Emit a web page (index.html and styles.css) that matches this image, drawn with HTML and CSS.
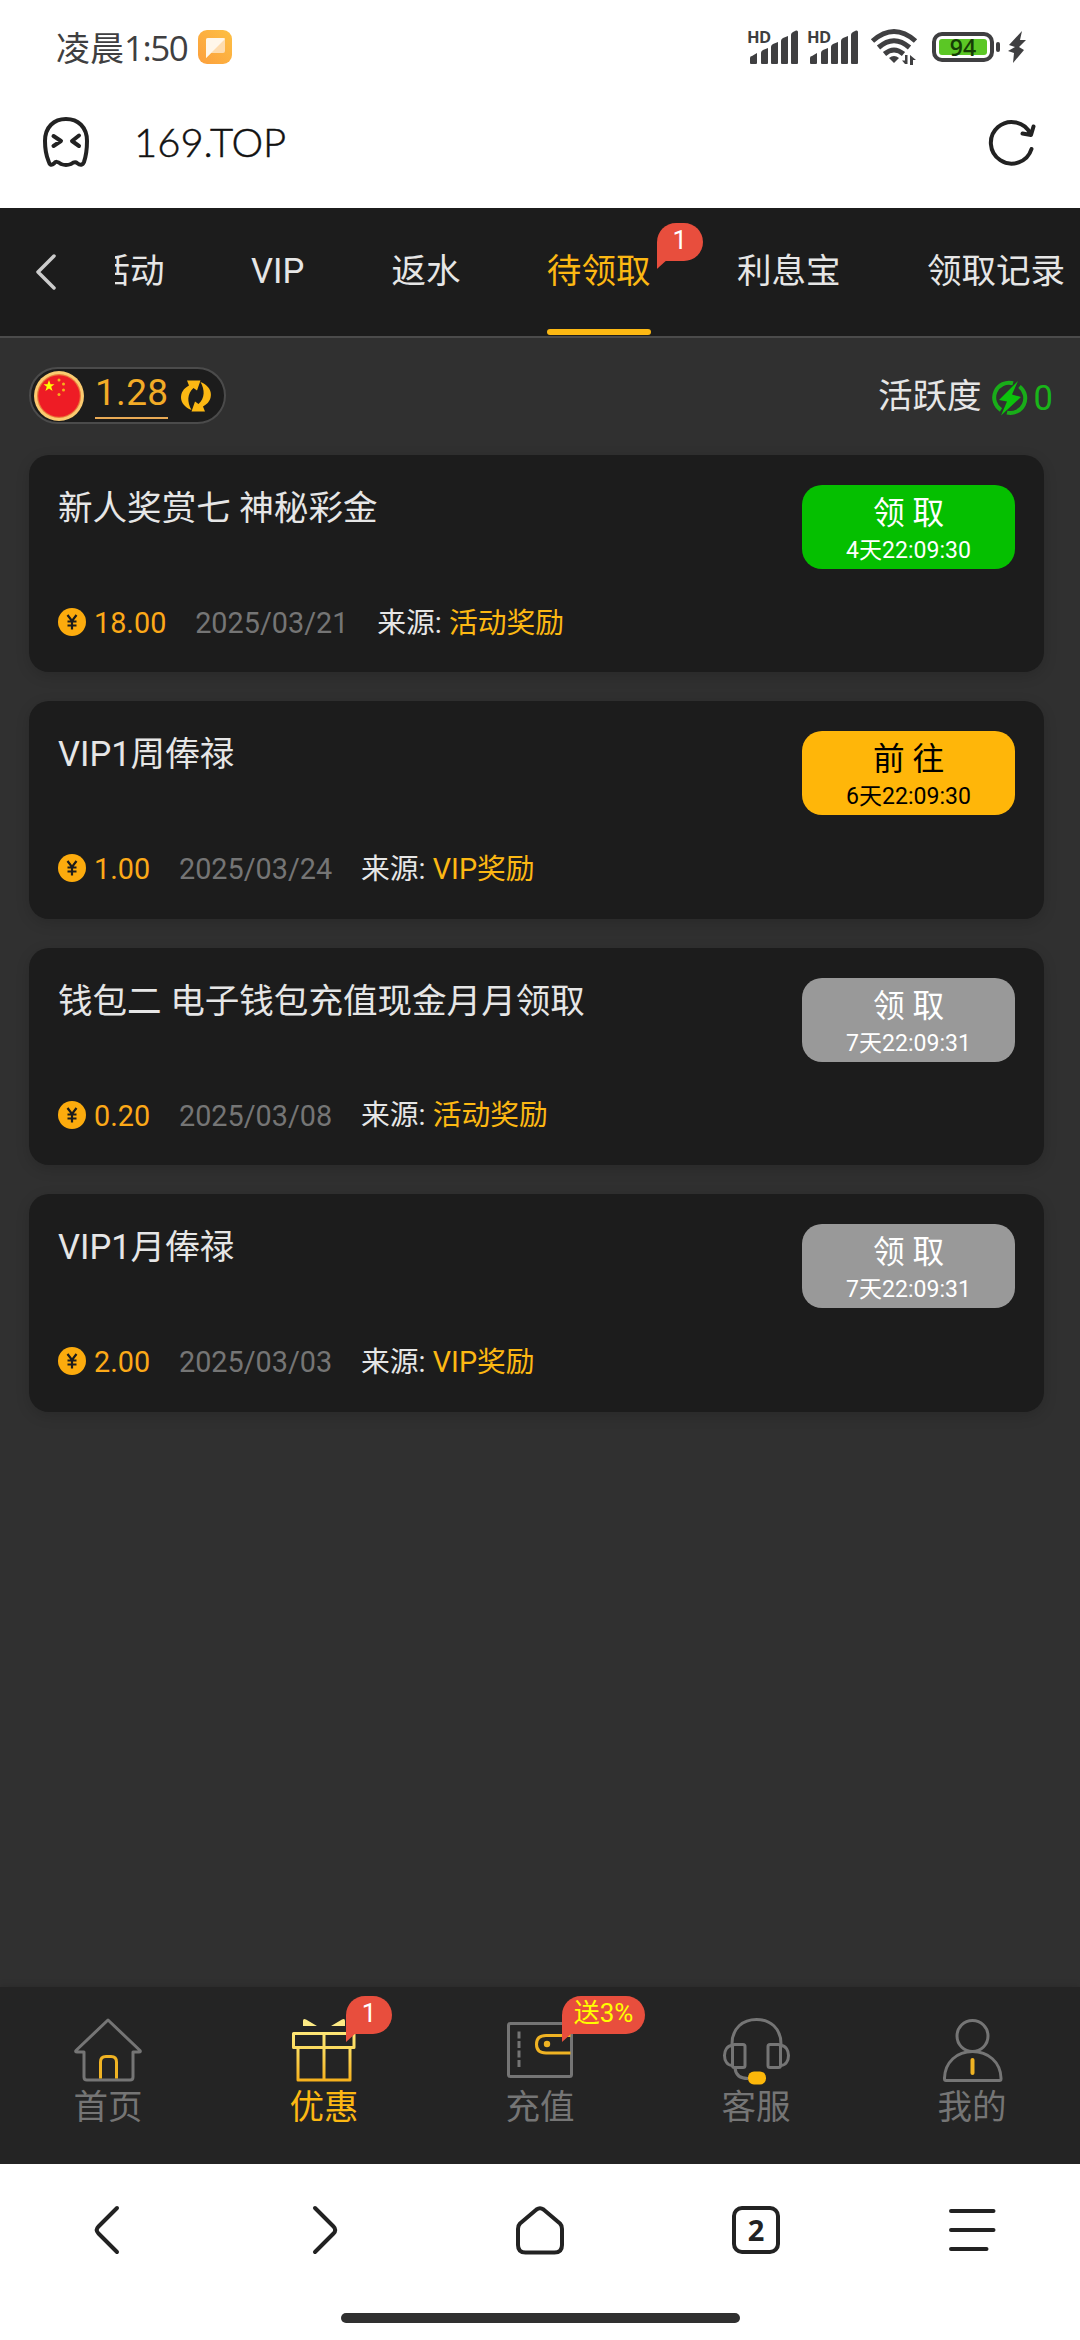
FILE: index.html
```
<!DOCTYPE html>
<html lang="zh-CN">
<head>
<meta charset="utf-8">
<title>待领取</title>
<link rel="stylesheet" href="styles.css">
</head>
<body>
<svg width="0" height="0" class="defs">
  <defs>
    <symbol id="signal" viewBox="0 0 50 34">
      <path d="M2 33V28Q2 26 4 26L9 23V33Q9 34 8 34H3Q2 34 2 33ZM13 33V23Q13 21 15 20L20 18V33Q20 34 19 34H14Q13 34 13 33ZM23 33V17Q23 15 25 14L30 12V33Q30 34 29 34H24Q23 34 23 33ZM33 33V11Q33 9 35 8L40 6V33Q40 34 39 34H34Q33 34 33 33ZM43 33V5Q43 3 45 2L48 0.5Q50 0 50 2V33Q50 34 49 34H44Q43 34 43 33Z"/>
    </symbol>
    <symbol id="coin" viewBox="0 0 28 28">
      <circle cx="14" cy="14" r="14" fill="#fcab0d"/>
      <path d="M9.500 7 14 13 18.500 7M14 13V21.500M9.500 13.500H18.500M9.500 17.500H18.500" fill="none" stroke="#1c1c1c" stroke-width="2.200"/>
    </symbol>
  </defs>
</svg>

<header class="status">
  <span class="clock">凌晨<b>1:50</b></span>
  <svg class="app" viewBox="0 0 34 34">
    <defs><linearGradient id="o" x1="1" y1="0" x2="0" y2="1"><stop offset="0" stop-color="#fdc044"/><stop offset="1" stop-color="#fc9f3c"/></linearGradient></defs>
    <rect width="34" height="34" rx="9" fill="url(#o)"/>
    <path d="M10 8H25Q27 8 27 10V21Q27 23 25 23H13L8 28V10Q8 8 10 8Z" fill="#fedcae"/>
    <path d="M10 8H25Q27 8 27 9L8 28V10Q8 8 10 8Z" fill="#fff7ea"/>
  </svg>
  <div class="signals">
    <div class="sig"><i>HD</i><svg viewBox="0 0 50 34"><use href="#signal"/></svg></div>
    <div class="sig"><i>HD</i><svg viewBox="0 0 50 34"><use href="#signal"/></svg></div>
    <svg class="wifi" viewBox="0 0 46 36">
      <g fill="none" stroke="#3f3f41" stroke-width="5">
        <path d="M1.500 12Q23-7 44.500 12"/><path d="M7.500 18.500Q23 5 38.500 18.500"/><path d="M13.500 25Q23 17 32.500 25"/>
      </g>
      <path d="M18 29Q23 25 28 29L23 34Z" fill="#3f3f41"/>
      <path d="M36.500 26V35H34L31 31.500H34V26ZM39 36V26L45 31H42V36Z" fill="#3f3f41"/>
    </svg>
    <div class="battery"><span>94</span></div>
    <svg class="bolt" viewBox="0 0 18 32"><path d="M14 0 1 14 7 16 0 20 6 22 5 32 16 19 11 16 18 9 12 9Z" fill="#3f3f41"/></svg>
  </div>
</header>

<div class="address">
  <svg class="ghost" viewBox="0 0 46 50" fill="none" stroke="#222" stroke-width="4" stroke-linecap="round" stroke-linejoin="round">
    <path d="M2 24C2 10 11 2 23 2S44 10 44 24C44 34 43 39 41 45Q39 50 34 46Q32 44 28 47Q23 49 18 47Q13 43 11 46.500Q7 50 5.500 44C3 38 2 33 2 24Z"/>
    <path d="M10.500 19 18 24 10.500 29M36 18.500 29 24 36 29"/>
  </svg>
  <span class="url">169.TOP</span>
  <svg class="reload" viewBox="0 0 48 48" fill="none" stroke="#222" stroke-width="4" stroke-linecap="round" stroke-linejoin="round">
    <path d="M42.500 31A20.800 20.800 0 1 1 41.500 16M33.500 15.500 42 17 44.500 8.500"/>
  </svg>
</div>

<nav class="tabs">
  <svg class="back" viewBox="0 0 24 38"><path d="M20 3 4 19 20 35" fill="none" stroke="#ccc" stroke-width="3.500" stroke-linecap="round" stroke-linejoin="round"/></svg>
  <div class="scroller">
    <span class="tab first">活动</span>
    <span class="tab vip">VIP</span>
    <span class="tab">返水</span>
    <span class="tab active">待领取<em class="badge">1</em></span>
    <span class="tab">利息宝</span>
    <span class="tab">领取记录</span>
  </div>
</nav>

<main>
  <div class="summary">
    <div class="balance">
      <svg class="flag" viewBox="0 0 50 50">
        <circle cx="25" cy="25" r="25" fill="#fbcb70"/><circle cx="25" cy="25" r="22" fill="#e97a3a"/><circle cx="25" cy="25" r="20.800" fill="#ee1c25"/>
        <path d="M15 9 16.500 13.200H20.500L17.200 15.700 18.600 20 15 17.400 11.400 20 12.800 15.700 9.500 13.200H13.500Z" fill="#ff0"/>
        <g fill="#f5b21c"><circle cx="25" cy="9" r="1.500"/><circle cx="29.500" cy="13" r="1.500"/><circle cx="29.500" cy="19" r="1.500"/><circle cx="25" cy="23.500" r="1.500"/></g>
      </svg>
      <span class="amount">1.28</span>
      <svg class="swap" viewBox="0 0 30 32" fill="#fcb813">
        <path d="M6 .5H19.500L16 10.500 12.500 8C6 14 6 22 10.500 30C-3 25-3 11 8 5.500Z"/>
        <path d="M24 31.500H10.500L14 21.500 17.500 24C24 18 24 10 19.500 2C33 7 33 21 22 26.500Z"/>
      </svg>
    </div>
    <div class="activity">
      <span>活跃度</span>
      <svg viewBox="0 0 34 34">
        <path d="M8 29A14.800 14.800 0 0 1 20 2.300M26.500 5.500A14.800 14.800 0 0 1 14 31.600" fill="none" stroke="#19ad19" stroke-width="4"/>
        <path d="M25 0 6 19 14 20.500 8 34.500 28 16 19 13.500Z" fill="#0cc20c"/>
      </svg>
      <b>0</b>
    </div>
  </div>

  <section class="list">
    <article class="card">
      <h2>新人奖赏七 神秘彩金</h2>
      <div class="meta"><svg viewBox="0 0 28 28"><use href="#coin"/></svg><b>18.00</b><time>2025/03/21</time><span>来源: <em>活动奖励</em></span></div>
      <div class="btn green"><strong>领 取</strong><small>4天22:09:30</small></div>
    </article>
    <article class="card">
      <h2>VIP1周俸禄</h2>
      <div class="meta"><svg viewBox="0 0 28 28"><use href="#coin"/></svg><b>1.00</b><time>2025/03/24</time><span>来源: <em>VIP奖励</em></span></div>
      <div class="btn gold"><strong>前 往</strong><small>6天22:09:30</small></div>
    </article>
    <article class="card">
      <h2>钱包二 电子钱包充值现金月月领取</h2>
      <div class="meta"><svg viewBox="0 0 28 28"><use href="#coin"/></svg><b>0.20</b><time>2025/03/08</time><span>来源: <em>活动奖励</em></span></div>
      <div class="btn"><strong>领 取</strong><small>7天22:09:31</small></div>
    </article>
    <article class="card">
      <h2>VIP1月俸禄</h2>
      <div class="meta"><svg viewBox="0 0 28 28"><use href="#coin"/></svg><b>2.00</b><time>2025/03/03</time><span>来源: <em>VIP奖励</em></span></div>
      <div class="btn"><strong>领 取</strong><small>7天22:09:31</small></div>
    </article>
  </section>
</main>

<nav class="menu">
  <a class="item">
    <svg viewBox="0 0 72 72" fill="none" stroke="#757575" stroke-width="3" stroke-linejoin="round">
      <path d="M36 5 4 35.500Q3 37 5 37H12V62Q12 65 15 65H58Q61 65 61 62V37H67Q69 37 68 35.500Z"/>
      <path d="M28.500 63.500V47Q28.500 41.500 34 41.500H39Q44.500 41.500 44.500 47V63.500" stroke="#f0b323"/>
    </svg>
    <span>首页</span>
  </a>
  <a class="item on">
    <svg viewBox="0 0 72 72" fill="none" stroke="url(#g)" stroke-width="3" stroke-linejoin="round">
      <defs><linearGradient id="g" gradientUnits="userSpaceOnUse" x1="0" y1="4" x2="0" y2="66"><stop offset="0" stop-color="#fff08a"/><stop offset=".5" stop-color="#fbd95c"/><stop offset="1" stop-color="#f5b01c"/></linearGradient></defs>
      <path d="M5.500 18.500H66V32.500H5.500ZM10 32.500V65H62V32.500M36 18.500V65"/>
      <path d="M15 11V6Q15 3 18 4.500L29 11ZM57 11V6Q57 3 54 4.500L43 11Z" fill="#fdea85" stroke="none"/>
    </svg>
    <span>优惠</span><em class="badge">1</em>
  </a>
  <a class="item">
    <svg viewBox="0 0 72 72" fill="none" stroke="#757575" stroke-width="3">
      <rect x="4.500" y="8.500" width="63" height="53" rx="2"/>
      <path d="M15 16.500V52" stroke-dasharray="7 2.500"/>
      <path d="M66.500 20.500H42Q32.500 20.500 32.500 29.200T42 38H66.500" stroke="#f0b323"/>
      <circle cx="43" cy="29" r="3.200" fill="#f0b323" stroke="none"/>
    </svg>
    <span>充值</span><em class="badge promo">送3%</em>
  </a>
  <a class="item">
    <svg viewBox="0 0 72 72" fill="none" stroke="#757575" stroke-width="3">
      <path d="M12 30V29C12 13 23 4.500 36.500 4.500S61 13 61 29V30"/>
      <rect x="12.500" y="29.500" width="12.500" height="23" rx="2"/><rect x="48" y="29.500" width="12.500" height="23" rx="2"/>
      <path d="M12 30.500C2 31 2 50 12 50.500M61 30.500C71 31 71 50 61 50.500M15 53Q16 63.500 28 63.500"/>
      <rect x="28" y="56.500" width="18" height="13" rx="6" fill="#fcb70a" stroke="none"/>
    </svg>
    <span>客服</span>
  </a>
  <a class="item">
    <svg viewBox="0 0 72 72" fill="none" stroke="#757575" stroke-width="3" stroke-linejoin="round">
      <ellipse cx="36.500" cy="21" rx="15.500" ry="15.500"/>
      <path d="M8.500 64V63C9 47 21 36.500 36.500 36.500S64.500 47 65 63V64Q65 65.500 63.500 65.500H10Q8.500 65.500 8.500 64Z"/>
      <path d="M36.500 45V58" stroke="#f0b323" stroke-width="4" stroke-linecap="round"/>
    </svg>
    <span>我的</span>
  </a>
</nav>

<footer class="browser">
  <div class="tools">
    <svg viewBox="0 0 60 60"><path d="M39 8 20.500 26.500Q17 30 20.500 33.500L39 52"/></svg>
    <svg viewBox="0 0 60 60"><path d="M21 8 39.500 26.500Q43 30 39.500 33.500L21 52"/></svg>
    <svg viewBox="0 0 60 60"><path d="M10 23.500Q8 25.500 8 29V45Q8 52.500 15.500 52.500H44.500Q52 52.500 52 45V29Q52 25.500 50 23.500L33.500 9.500Q30 7 26.500 9.500Z"/></svg>
    <div class="count"><b>2</b></div>
    <svg viewBox="0 0 60 60"><path d="M9 11H51.500M9 30H51.500M9 49H44.500"/></svg>
  </div>
  <div class="handle"></div>
</footer>
</body>
</html>
```
FILE: styles.css
```
* { box-sizing: border-box; }
body {
  margin: 0;
  width: 1080px;
  height: 2340px;
  display: flex;
  flex-direction: column;
  overflow: hidden;
  background: #303030;
  font-family: Roboto, "Noto Sans CJK SC", sans-serif;
  color: #e6e6e6;
}
svg { display: block; flex: none; overflow: visible; }
.defs { position: absolute; }
b, strong, h2 { font-weight: 400; }
em, i { font-style: normal; }

/* Status bar */
.status {
  height: 94px;
  flex: none;
  padding-left: 56px;
  display: flex;
  align-items: center;
  background: #fff;
  color: #3f3f41;
}
.clock { width: 142px; font-size: 34px; font-family: "Noto Sans CJK SC", sans-serif; white-space: nowrap; line-height: 92px; }
.clock b { font-family: "Open Sans", sans-serif; font-size: 35px; letter-spacing: -1.5px; }
.app { width: 34px; height: 34px; }
.signals { margin-left: auto; padding-right: 54px; display: flex; align-items: center; }
.sig { position: relative; width: 50px; height: 34px; margin-right: 10px; fill: #3f3f41; }
.sig i { position: absolute; left: -1px; top: -2px; font: 700 16.500px/18px "Open Sans", sans-serif; letter-spacing: -.5px; }
.sig svg { height: 34px; }
.wifi { width: 46px; height: 36px; margin-left: 3px; }
.battery {
  position: relative;
  width: 62px;
  height: 30px;
  margin: 0 14px 0 15px;
  padding: 3px;
  border: 4px solid #3f3f41;
  border-radius: 10px;
}
.battery::after { content: ""; position: absolute; right: -10px; top: 6px; width: 4px; height: 10px; border-radius: 2px; background: #3f3f41; }
.battery span { display: block; height: 16px; border-radius: 3px; background: #5bc725; color: #163d06; font: 600 23px/17px "Open Sans", sans-serif; text-align: center; }
.bolt { width: 18px; height: 32px; }

/* Address bar */
.address {
  height: 114px;
  flex: none;
  padding: 0 43px 18px 43px;
  display: flex;
  align-items: center;
  background: #fff;
}
.ghost { width: 46px; height: 50px; }
.url { margin-left: 45px; color: #111; font: 300 40px/50px Lato, sans-serif; -webkit-text-stroke: .5px #111; }
.reload { width: 48px; height: 48px; margin-left: auto; }

/* Category tabs */
.tabs {
  height: 130px;
  flex: none;
  display: flex;
  align-items: center;
  padding-left: 34px;
  border-bottom: 2px solid #4b4b4b;
  background: #1c1c1c;
}
.back { width: 24px; height: 38px; margin-right: 57px; }
.scroller { flex: 1; height: 128px; display: flex; gap: 86.400px; overflow: hidden; }
.tab { position: relative; flex: none; height: 128px; font-size: 34.560px; line-height: 127px; }
.first { margin-left: -19.500px; }
.vip { width: 54px; }
.active { color: #fcb813; }
.active::after { content: ""; position: absolute; left: 0; right: 0; bottom: 1px; height: 6px; border-radius: 3px; background: #fcb813; }
.badge {
  position: absolute;
  width: 46px;
  height: 38px;
  border-radius: 19px 19px 19px 0;
  background: #e84e3d;
  color: #fff;
  font-size: 26px;
  line-height: 34px;
  text-align: center;
}
.badge::after { content: ""; position: absolute; left: 0; top: 37px; width: 10px; height: 9px; background: #e84e3d; clip-path: polygon(0 0, 100% 0, 0 100%); }
.tab .badge { left: 110px; top: 15px; }

/* Balance and activity */
main { flex: 1; }
.summary { height: 117px; padding: 29px 27px 0 29px; display: flex; justify-content: space-between; align-items: flex-start; }
.balance { width: 197px; height: 57px; padding: 0 13px 0 3px; display: flex; align-items: center; border: 2px solid #4b4b4b; border-radius: 29px; background: #1c1c1c; }
.flag { width: 50px; height: 50px; }
.amount { align-self: flex-start; width: 73px; height: 50px; margin: 0 13px 0 11px; border-bottom: 2px solid #e9aa55; color: #f2ab27; font-size: 37px; line-height: 48px; letter-spacing: .3px; }
.swap { width: 30px; height: 32px; }
.activity { display: flex; align-items: center; height: 62px; font-size: 34.560px; }
.activity span { line-height: 40px; margin-top: -4px; }
.activity svg { width: 34px; height: 34px; margin: 0 7px 0 11px; }
.activity b { color: #19b519; }

/* Reward cards */
.list { display: grid; gap: 29px; padding: 0 36px 0 29px; }
.card {
  height: 217.400px;
  padding: 30px 29px 0;
  display: grid;
  grid-template-columns: 1fr 213px;
  grid-template-rows: 110px 56px;
  border-radius: 20px;
  background: #1c1c1c;
  box-shadow: 0 4px 14px rgba(0, 0, 0, .15);
}
.card h2 { margin: 0; font-size: 34.560px; line-height: 47px; white-space: nowrap; }
.meta { grid-row: 2; display: flex; align-items: center; font-size: 28.800px; white-space: nowrap; }
.meta svg { width: 28px; height: 28px; margin: -2px 8px 0 0; }
.meta b { color: #fca918; }
.meta time { margin: 0 28.800px; color: #757575; }
.meta span { line-height: 34px; margin-top: -1px; }
.meta em { color: #fcb813; }
.btn { height: 84px; padding-top: 9px; border-radius: 20px; background: #999; color: #fff; text-align: center; white-space: nowrap; }
.btn strong, .btn small { display: block; }
.btn strong { font-size: 31.700px; line-height: 40px; }
.btn small { font-size: 23.040px; line-height: 34px; }
.green { background: #05bf00; }
.gold { background: #ffb609; color: #000; }

/* Site navigation */
.menu { height: 177px; flex: none; display: grid; grid-template-columns: repeat(5, 1fr); background: #242424; box-shadow: 0 0 8px rgba(0, 0, 0, .15); }
.item { position: relative; padding-top: 28px; display: flex; flex-direction: column; align-items: center; color: #757575; font-size: 34.560px; line-height: 41px; }
.item svg { width: 72px; height: 72px; }
.on { color: #fcb813; }
.item .badge { left: 130px; top: 9px; }
.item .promo { width: 83px; color: #ff0; }

/* Browser toolbar */
.browser { height: 176px; flex: none; background: #fff; }
.tools { height: 132px; display: grid; grid-template-columns: repeat(5, 1fr); align-items: center; justify-items: center; }
.tools svg { width: 60px; height: 60px; fill: none; stroke: #222; stroke-width: 4; stroke-linecap: round; stroke-linejoin: round; }
.count { width: 48px; height: 48px; border: 4px solid #222; border-radius: 10px; color: #222; text-align: center; }
.count b { font: 700 29px/39px "Open Sans", sans-serif; }
.handle { width: 399px; height: 10px; margin: 17px auto 0; border-radius: 5px; background: #303030; }
```
